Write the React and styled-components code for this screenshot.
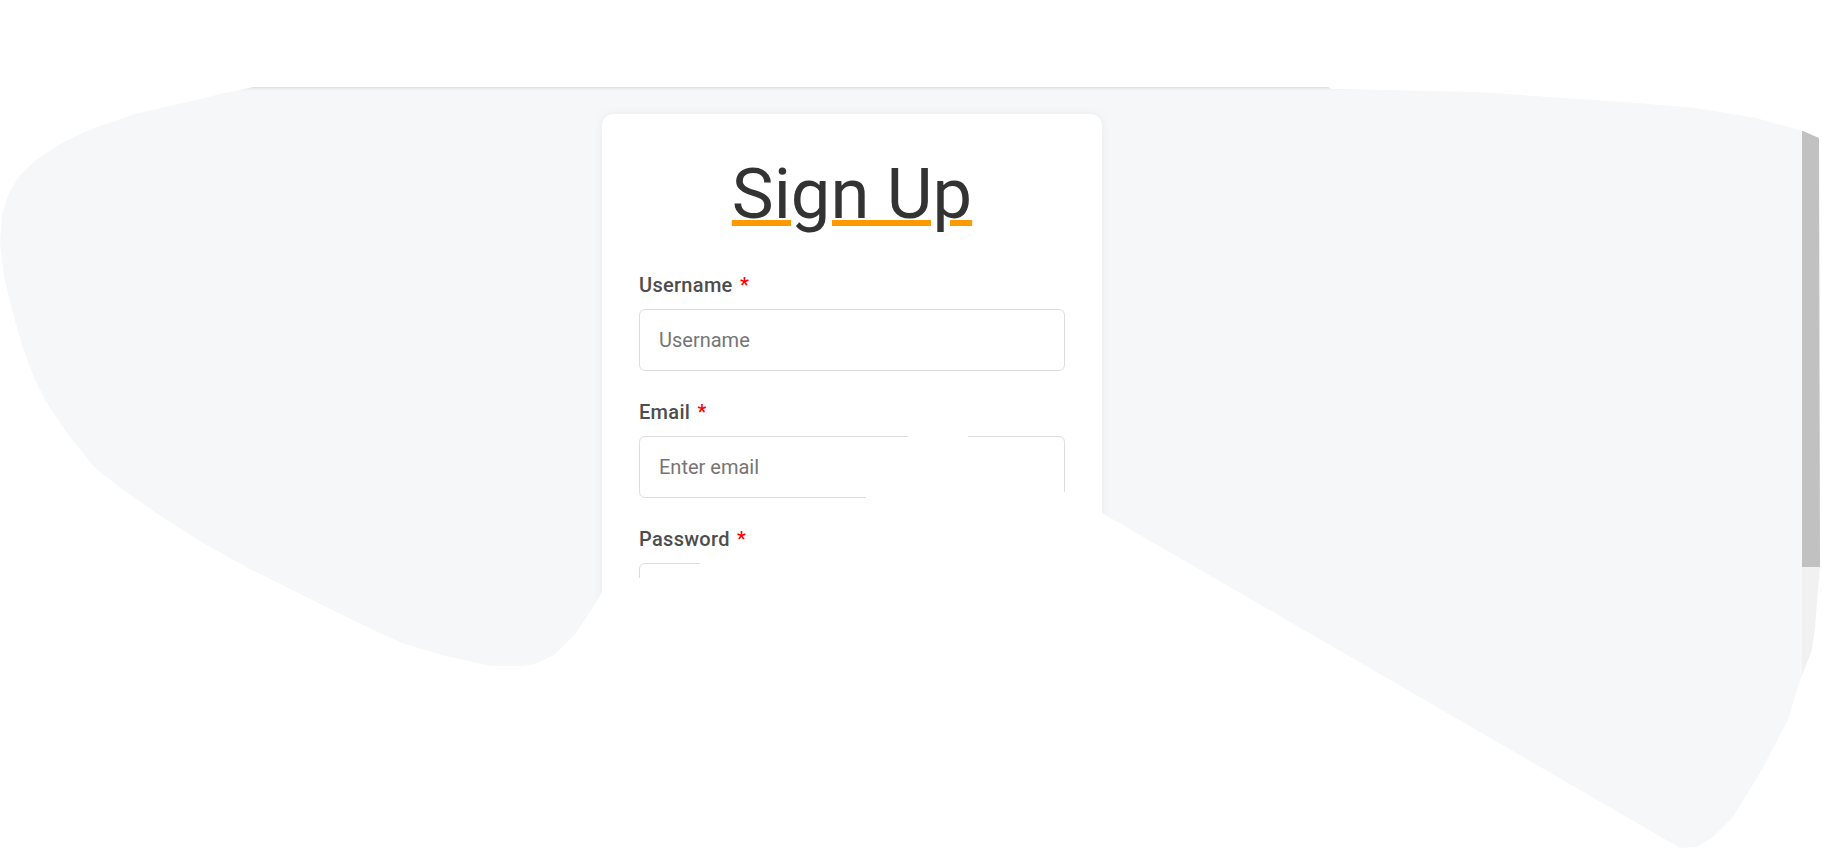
import React from "react";
import styled, { createGlobalStyle } from "styled-components";

const GlobalStyle = createGlobalStyle`
  html, body {
    margin: 0;
    padding: 0;
    overflow: hidden;
    background: #ffffff;
    font-family: Roboto, "Liberation Sans", Arial, sans-serif;
  }
  * {
    box-sizing: border-box;
  }
`;

const Screen = styled.div`
  display: flex;
  width: 1822px;
  height: 849px;
  position: relative;
`;

const Viewport = styled.div`
  flex: 1;
  display: flex;
  flex-direction: column;
`;

const Header = styled.header`
  height: 87px;
  background: #ffffff;
  box-shadow: 0 1px 3px rgba(0, 0, 0, 0.14);
  position: relative;
  z-index: 1;
`;

const Main = styled.main`
  flex: 1;
  background: #f6f7f9;
  padding: 27px 0 0 602px;
`;

const Card = styled.div`
  width: 500px;
  background: #ffffff;
  border-radius: 12px;
  padding: 37px 37px 40px;
  box-shadow: 0 0 12px rgba(0, 0, 0, 0.05);
`;

const Title = styled.h1`
  margin: 0 0 37px;
  font-size: 70.5px;
  line-height: 86px;
  font-weight: 400;
  color: #333333;
  text-align: center;
  text-decoration: underline;
  text-decoration-color: #ff9900;
  text-decoration-thickness: 6px;
  text-underline-offset: 2px;
`;

const Field = styled.div`
  display: flex;
  flex-direction: column;
  margin-bottom: 30px;
`;

const Label = styled.label`
  font-size: 20px;
  line-height: 23px;
  font-weight: 500;
  letter-spacing: 0.3px;
  color: #4d4d4d;
  margin-bottom: 12px;
`;

const Required = styled.span`
  color: #ff0000;
  margin-left: 2px;
`;

const Input = styled.input`
  height: 62px;
  padding: 0 19px;
  font-family: inherit;
  font-size: 20px;
  color: #333333;
  border: 1px solid #dddddd;
  border-radius: 6px;
  outline: none;
  background: #ffffff;
  &::placeholder {
    color: #757575;
  }
`;

const SubmitButton = styled.button`
  width: 100%;
  height: 56px;
  border: none;
  border-radius: 6px;
  background: #ff9900;
  color: #ffffff;
  font-family: inherit;
  font-size: 20px;
  font-weight: 500;
`;

const Scrollbar = styled.div`
  width: 20px;
  background: #f1f1f1;
`;

const Thumb = styled.div`
  height: 567px;
  background: #c1c1c1;
`;

const Unpainted = styled.svg`
  position: absolute;
  left: 0;
  top: 0;
  width: 1822px;
  height: 849px;
  pointer-events: none;
  z-index: 10;
`;

const visible = [
  [259, 86], [1327, 86], [1331, 89], [1478, 92], [1637, 103], [1696, 108],
  [1756, 118], [1803, 131], [1819, 138], [1820, 567], [1815, 627],
  [1812, 650], [1800, 680], [1788, 720], [1760, 773], [1733, 817],
  [1713, 837], [1697, 847], [1680, 848], [1102, 513], [1102, 492],
  [866, 492], [866, 556], [700, 556], [700, 578], [610, 578], [602, 592],
  [590, 612], [576, 633], [554, 655], [535, 664], [522, 666], [491, 666],
  [445, 656], [402, 643], [365, 626], [326, 607], [286, 587], [246, 567],
  [198, 540], [156, 513], [122, 489], [94, 467], [67, 433], [48, 405],
  [34, 378], [22, 345], [12, 310], [4, 277], [0, 243], [2, 215], [9, 193],
  [20, 175], [36, 160], [60, 144], [89, 130], [135, 114], [187, 102],
  [225, 93],
];

const holePath =
  "M" + visible.map(([x, y]) => `${x} ${y}`).join(" L") + " Z";

function Fields() {
  const fields = [
    { name: "Username", placeholder: "Username", type: "text" },
    { name: "Email", placeholder: "Enter email", type: "email" },
    { name: "Password", placeholder: "Enter password", type: "password" },
  ];
  return fields.map((f) => (
    <Field key={f.name}>
      <Label>
        {f.name} <Required>*</Required>
      </Label>
      <Input type={f.type} placeholder={f.placeholder} />
    </Field>
  ));
}

export default function App() {
  return (
    <>
      <GlobalStyle />
      <Screen>
        <Viewport>
          <Header />
          <Main>
            <Card>
              <Title>Sign Up</Title>
              <Fields />
              <SubmitButton>Sign Up</SubmitButton>
            </Card>
          </Main>
        </Viewport>
        <Scrollbar>
          <Thumb />
        </Scrollbar>
        <Unpainted viewBox="0 0 1822 849">
          <path
            fill="#ffffff"
            fillRule="evenodd"
            d={`M0 0 H1822 V849 H0 Z ${holePath}`}
          />
          <rect x="908" y="433" width="60" height="6" rx="2" fill="#ffffff" />
        </Unpainted>
      </Screen>
    </>
  );
}
